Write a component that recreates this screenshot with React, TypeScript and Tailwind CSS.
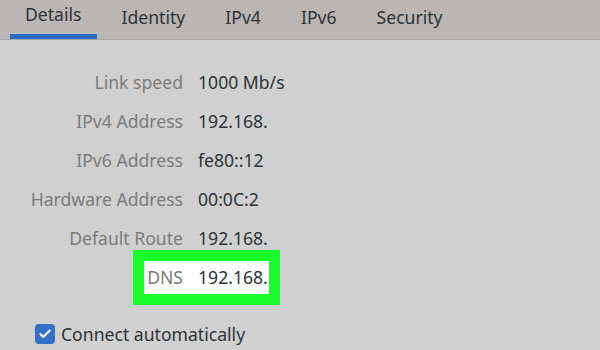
import { Check } from 'lucide-react'

const tabs = ['Details', 'Identity', 'IPv4', 'IPv6', 'Security']

// values are cut off in the panel, so only the visible part is shown
const rows = [
  { label: 'Link speed', value: '1000 Mb/s' },
  { label: 'IPv4 Address', value: '192.168.' },
  { label: 'IPv6 Address', value: 'fe80::12' },
  { label: 'Hardware Address', value: '00:0C:2' },
  { label: 'Default Route', value: '192.168.' },
]

export default function App() {
  return (
    <div
      className="h-[350px] w-[600px] overflow-hidden bg-[#d0d0d0] text-[17.6px] text-[#2e3436]"
      style={{ fontFamily: '"Noto Sans", "Open Sans", sans-serif' }}
    >
      <div className="flex h-[40px] gap-[10px] border-b border-[#a9a5a3] bg-[#bab6b4] pl-[10px]">
        {tabs.map((t, i) => (
          <div
            key={t}
            className={`flex items-center px-[15px] pb-[5px] ${
              i === 0 ? 'border-b-[5px] border-[#2a6ac3] pb-0' : ''
            }`}
          >
            {t}
          </div>
        ))}
      </div>

      <div className="pt-[23px]">
        {rows.map((r) => (
          <div key={r.label} className="flex h-[39px] items-center">
            <span className="w-[183px] shrink-0 text-right text-[#7b7b7b]">{r.label}</span>
            <span className="ml-[15px] whitespace-nowrap">{r.value}</span>
          </div>
        ))}

        <div className="relative flex h-[39px] items-center">
          <div className="absolute left-[133px] top-[-8px] h-[55px] w-[147px] border-[11px] border-[#1afc2a] bg-white" />
          <span className="relative w-[183px] shrink-0 text-right text-[#7b7b7b]">DNS</span>
          <span className="relative ml-[15px] whitespace-nowrap">192.168.</span>
        </div>
      </div>

      <div className="mt-[24px] flex items-center pl-[35px]">
        <span className="flex h-[20px] w-[20px] items-center justify-center rounded-[4px] bg-[#3370c6]">
          <Check className="h-[14px] w-[14px] text-white" strokeWidth={3.5} />
        </span>
        <span className="ml-[6px]">Connect automatically</span>
      </div>
    </div>
  )
}
